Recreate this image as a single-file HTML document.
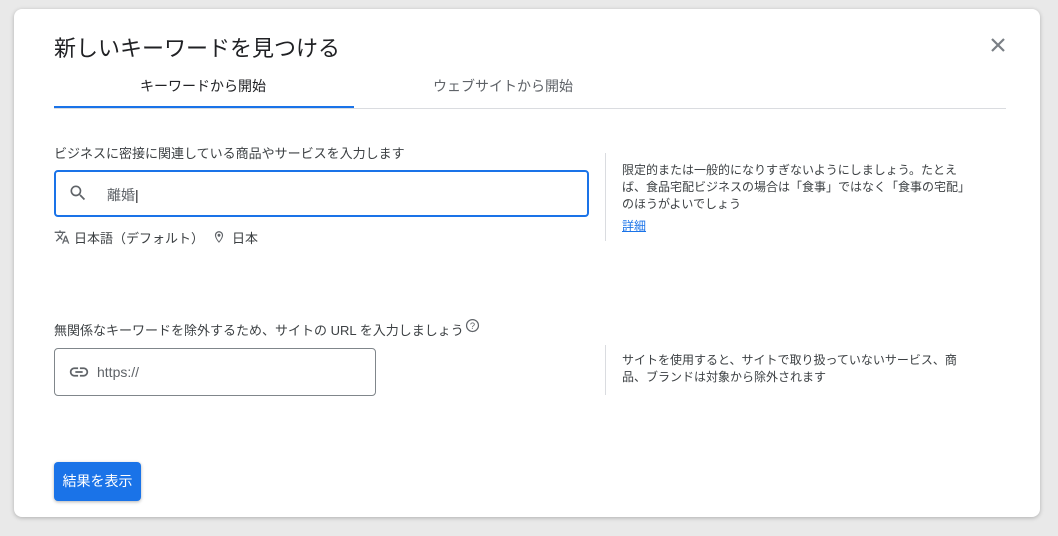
<!DOCTYPE html>
<html><head><meta charset="utf-8"><style>
body{margin:0;width:1058px;height:536px;background:#e9e9e9;font-family:"Liberation Sans","Noto Sans CJK JP",sans-serif;position:relative;overflow:hidden}
.d{position:absolute;left:14px;top:9px;width:1026px;height:508px;background:#fff;border-radius:8px;box-shadow:0 1px 4px rgba(0,0,0,.25)}
.a{position:absolute;white-space:nowrap}
</style></head><body>
<div class="d">
<div class="a" style="left:40px;top:22px;font-size:22px;color:#202124">新しいキーワードを見つける</div>
<svg class="a" style="left:975px;top:27px" width="18" height="18" viewBox="0 0 18 18"><path d="M3 3L15 15M15 3L3 15" stroke="#7a7f85" stroke-width="2.2"/></svg>
<div class="a" style="left:126px;top:67px;font-size:14px;color:#202124">キーワードから開始</div>
<div class="a" style="left:419px;top:67px;font-size:14px;color:#5f6368">ウェブサイトから開始</div>
<div class="a" style="left:40px;top:99px;width:952px;height:1px;background:#dadce0"></div>
<div class="a" style="left:40px;top:97px;width:300px;height:2px;background:#1a73e8"></div>
<div class="a" style="left:40px;top:134px;font-size:13px;color:#3c4043">ビジネスに密接に関連している商品やサービスを入力します</div>
<div class="a" style="left:40px;top:161px;width:531px;height:43px;border:2px solid #1a73e8;border-radius:4px"></div>
<svg class="a" style="left:54px;top:174px" width="20" height="20" viewBox="0 0 24 24"><path fill="#5f6368" d="M15.5 14h-.79l-.28-.27A6.47 6.47 0 0016 9.5 6.5 6.5 0 109.5 16c1.61 0 3.09-.59 4.23-1.57l.27.28v.79l5 4.99L20.49 19l-4.99-5zm-6 0C7.01 14 5 11.990 5 9.5S7.01 5 9.5 5 14 7.01 14 9.5 11.99 14 9.5 14z"/></svg>
<div class="a" style="left:93px;top:176px;font-size:14px;color:#5f6368">離婚<span style="color:#202124">|</span></div>
<svg class="a" style="left:40px;top:220px" width="16" height="16" viewBox="0 0 24 24"><path fill="#5f6368" d="M12.87 15.07l-2.54-2.51.03-.03A17.52 17.52 0 0014.07 6H17V4h-7V2H8v2H1v2h11.17C11.5 7.92 10.44 9.75 9 11.35 8.07 10.32 7.3 9.19 6.69 8h-2c.73 1.630 1.73 3.17 2.98 4.56l-5.09 5.02L4 19l5-5 3.11 3.11.76-2.04zM18.5 10h-2L12 22h2l1.12-3h4.75L21 22h2l-4.5-12zm-2.62 7l1.62-4.33L19.12 17h-3.24z"/></svg>
<div class="a" style="left:60px;top:219px;font-size:13px;color:#3c4043">日本語（デフォルト）</div>
<svg class="a" style="left:198px;top:221px" width="14" height="14" viewBox="0 0 24 24"><path fill="#5f6368" d="M12 2C8.13 2 5 5.13 5 9c0 5.25 7 13 7 13s7-7.75 7-13c0-3.87-3.13-7-7-7zm0 17.5C10 17 7 12.7 7 9a5 5 0 0110 0c0 3.7-3 8-5 10.5zM12 6.5a2.5 2.5 0 100 5 2.5 2.5 0 000-5z"/></svg>
<div class="a" style="left:218px;top:219px;font-size:13px;color:#3c4043">日本</div>
<div class="a" style="left:591px;top:144px;width:1px;height:88px;background:#dadce0"></div>
<div class="a" style="left:608px;top:153px;font-size:12px;color:#3c4043;line-height:17px">限定的または一般的になりすぎないようにしましょう。たとえ<br>ば、食品宅配ビジネスの場合は「食事」ではなく「食事の宅配」<br>のほうがよいでしょう</div>
<div class="a" style="left:608px;top:208px;font-size:12px;color:#1a73e8;text-decoration:underline">詳細</div>
<div class="a" style="left:40px;top:311px;font-size:13px;color:#3c4043">無関係なキーワードを除外するため、サイトの URL を入力しましょう</div>
<svg class="a" style="left:451px;top:309px" width="15" height="15" viewBox="0 0 24 24"><circle cx="12" cy="12" r="9.5" fill="none" stroke="#5f6368" stroke-width="2"/><text x="12" y="17.5" font-size="15" text-anchor="middle" fill="#5f6368" font-family="Liberation Sans">?</text></svg>
<div class="a" style="left:40px;top:339px;width:320px;height:46px;border:1px solid #80868b;border-radius:4px"></div>
<svg class="a" style="left:54px;top:352px" width="22" height="22" viewBox="0 0 24 24"><path fill="#5f6368" d="M3.9 12c0-1.71 1.39-3.1 3.1-3.1h4V7H7c-2.76 0-5 2.24-5 5s2.24 5 5 5h4v-1.9H7c-1.710 0-3.1-1.39-3.1-3.1zM8 13h8v-2H8v2zm9-6h-4v1.9h4c1.71 0 3.1 1.39 3.1 3.1s-1.39 3.1-3.1 3.1h-4V17h4c2.76 0 5-2.24 5-5s-2.24-5-5-5z"/></svg>
<div class="a" style="left:83px;top:355px;font-size:14px;color:#5f6368">https://</div>
<div class="a" style="left:591px;top:336px;width:1px;height:50px;background:#dadce0"></div>
<div class="a" style="left:608px;top:343px;font-size:12px;color:#3c4043;line-height:17px">サイトを使用すると、サイトで取り扱っていないサービス、商<br>品、ブランドは対象から除外されます</div>
<div class="a" style="left:40px;top:453px;width:87px;height:39px;background:#1a73e8;border-radius:4px;box-shadow:0 1px 3px rgba(0,0,0,.3);color:#fff;font-size:14px;line-height:39px;text-align:center">結果を表示</div>
</div>
</body></html>
